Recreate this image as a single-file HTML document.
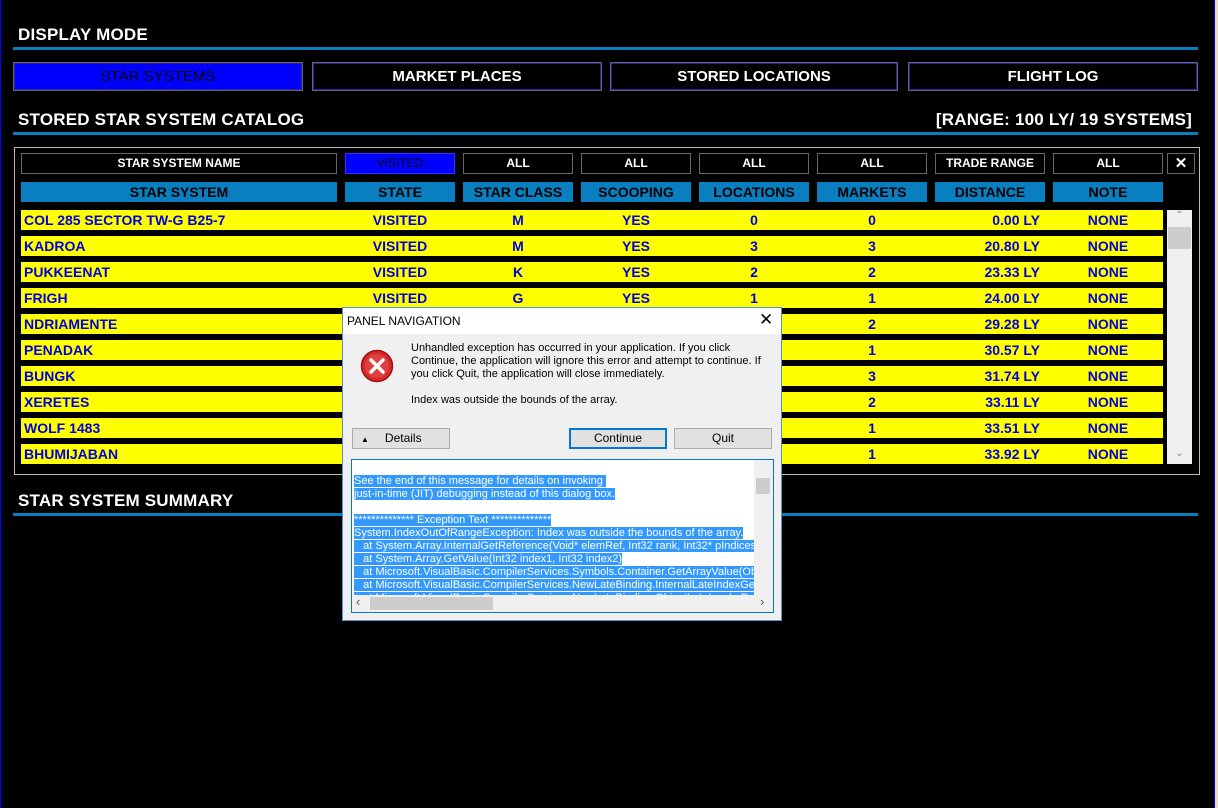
<!DOCTYPE html>
<html><head><meta charset="utf-8"><style>
*{margin:0;padding:0;box-sizing:border-box}
body{width:1218px;height:808px;background:#e8dcc0;position:relative;overflow:hidden;font-family:"Liberation Sans",Arial,sans-serif}
#app{position:absolute;left:0;top:0;width:1215px;height:808px;background:#000;border-left:1px solid #0000ff;border-right:1px solid #0000ff}
.a{position:absolute}
.h{color:#fff;font-size:17px;font-weight:bold;letter-spacing:0.2px}
.line{position:absolute;height:3px;background:#0a7fc0}
.mb{position:absolute;top:62px;height:29px;border:1px solid #666;outline:1px solid #2222aa;outline-offset:-2px;color:#fff;font-size:15px;font-weight:bold;text-align:center;line-height:27px}
.f{position:absolute;top:153px;height:21px;border:1px solid #666;color:#fff;font-size:12px;font-weight:bold;text-align:center;line-height:19px}
.hd{position:absolute;top:182px;height:20px;background:#0a7fc0;color:#000;font-size:14px;font-weight:bold;text-align:center;line-height:20px}
.r{position:absolute;left:20px;width:1142px;height:20px;background:#ffff00;color:#0000e0;font-size:14px;font-weight:bold;line-height:20px}
.r span{position:absolute;top:0;text-align:center}
.dlg{font-family:"Liberation Sans",Arial,sans-serif;font-size:11px;color:#000}
.btn{position:absolute;height:21px;background:#e1e1e1;border:1px solid #adadad;text-align:center;line-height:19px;font-size:12px}
.sel{background:#3399ff;color:#fff}
</style></head><body>
<div id="app">
<div class="a h" style="left:17px;top:25px">DISPLAY MODE</div>
<div class="line" style="left:12px;top:47px;width:1185px"></div>
<div class="mb" style="left:12px;width:290px;background:#0000ff;color:#000;font-weight:normal">STAR SYSTEMS</div>
<div class="mb" style="left:311px;width:290px">MARKET PLACES</div>
<div class="mb" style="left:609px;width:288px">STORED LOCATIONS</div>
<div class="mb" style="left:907px;width:290px">FLIGHT LOG</div>
<div class="a h" style="left:17px;top:110px">STORED STAR SYSTEM CATALOG</div>
<div class="a h" style="right:22px;top:110px">[RANGE: 100 LY/ 19 SYSTEMS]</div>
<div class="line" style="left:12px;top:132px;width:1185px"></div>
<div class="a" style="left:13px;top:147px;width:1186px;height:328px;border:1px solid #bbb"></div>

<div class="f" style="left:20px;width:316px">STAR SYSTEM NAME</div>
<div class="f" style="left:344px;width:110px;background:#0000ff;color:#000;border-color:#3333ff;font-weight:normal">VISITED</div>
<div class="f" style="left:462px;width:110px">ALL</div>
<div class="f" style="left:580px;width:110px">ALL</div>
<div class="f" style="left:698px;width:110px">ALL</div>
<div class="f" style="left:816px;width:110px">ALL</div>
<div class="f" style="left:934px;width:110px">TRADE RANGE</div>
<div class="f" style="left:1052px;width:110px">ALL</div>
<div class="f" style="left:1166px;width:28px;font-size:15px">✕</div>

<div class="hd" style="left:20px;width:316px">STAR SYSTEM</div>
<div class="hd" style="left:344px;width:110px">STATE</div>
<div class="hd" style="left:462px;width:110px">STAR CLASS</div>
<div class="hd" style="left:580px;width:110px">SCOOPING</div>
<div class="hd" style="left:698px;width:110px">LOCATIONS</div>
<div class="hd" style="left:816px;width:110px">MARKETS</div>
<div class="hd" style="left:934px;width:110px">DISTANCE</div>
<div class="hd" style="left:1052px;width:110px">NOTE</div>

<div class="r" style="top:210px"><span style="left:3px">COL 285 SECTOR TW-G B25-7</span><span style="left:324px;width:110px">VISITED</span><span style="left:442px;width:110px">M</span><span style="left:560px;width:110px">YES</span><span style="left:678px;width:110px">0</span><span style="left:796px;width:110px">0</span><span style="left:914px;width:105px;text-align:right">0.00 LY</span><span style="left:1032px;width:110px">NONE</span></div>
<div class="r" style="top:236px"><span style="left:3px">KADROA</span><span style="left:324px;width:110px">VISITED</span><span style="left:442px;width:110px">M</span><span style="left:560px;width:110px">YES</span><span style="left:678px;width:110px">3</span><span style="left:796px;width:110px">3</span><span style="left:914px;width:105px;text-align:right">20.80 LY</span><span style="left:1032px;width:110px">NONE</span></div>
<div class="r" style="top:262px"><span style="left:3px">PUKKEENAT</span><span style="left:324px;width:110px">VISITED</span><span style="left:442px;width:110px">K</span><span style="left:560px;width:110px">YES</span><span style="left:678px;width:110px">2</span><span style="left:796px;width:110px">2</span><span style="left:914px;width:105px;text-align:right">23.33 LY</span><span style="left:1032px;width:110px">NONE</span></div>
<div class="r" style="top:288px"><span style="left:3px">FRIGH</span><span style="left:324px;width:110px">VISITED</span><span style="left:442px;width:110px">G</span><span style="left:560px;width:110px">YES</span><span style="left:678px;width:110px">1</span><span style="left:796px;width:110px">1</span><span style="left:914px;width:105px;text-align:right">24.00 LY</span><span style="left:1032px;width:110px">NONE</span></div>
<div class="r" style="top:314px"><span style="left:3px">NDRIAMENTE</span><span style="left:796px;width:110px">2</span><span style="left:914px;width:105px;text-align:right">29.28 LY</span><span style="left:1032px;width:110px">NONE</span></div>
<div class="r" style="top:340px"><span style="left:3px">PENADAK</span><span style="left:796px;width:110px">1</span><span style="left:914px;width:105px;text-align:right">30.57 LY</span><span style="left:1032px;width:110px">NONE</span></div>
<div class="r" style="top:366px"><span style="left:3px">BUNGK</span><span style="left:796px;width:110px">3</span><span style="left:914px;width:105px;text-align:right">31.74 LY</span><span style="left:1032px;width:110px">NONE</span></div>
<div class="r" style="top:392px"><span style="left:3px">XERETES</span><span style="left:796px;width:110px">2</span><span style="left:914px;width:105px;text-align:right">33.11 LY</span><span style="left:1032px;width:110px">NONE</span></div>
<div class="r" style="top:418px"><span style="left:3px">WOLF 1483</span><span style="left:796px;width:110px">1</span><span style="left:914px;width:105px;text-align:right">33.51 LY</span><span style="left:1032px;width:110px">NONE</span></div>
<div class="r" style="top:444px"><span style="left:3px">BHUMIJABAN</span><span style="left:796px;width:110px">1</span><span style="left:914px;width:105px;text-align:right">33.92 LY</span><span style="left:1032px;width:110px">NONE</span></div>

<div class="a" style="left:1166px;top:210px;width:25px;height:254px;background:#f0f0f0"></div>
<div class="a" style="left:1167px;top:227px;width:23px;height:22px;background:#cdcdcd"></div>
<div class="a" style="left:1166px;top:210px;width:25px;text-align:center;font-size:10px;color:#888">⌃</div>
<div class="a" style="left:1166px;top:448px;width:25px;text-align:center;font-size:10px;color:#888">⌄</div>

<div class="a h" style="left:17px;top:491px">STAR SYSTEM SUMMARY</div>
<div class="line" style="left:12px;top:513px;width:1185px"></div>
</div>

<!-- dialog -->
<div class="a dlg" style="left:342px;top:307px;width:440px;height:314px;background:#f0f0f0;border:1px solid #5a8fd0">
 <div class="a" style="left:0;top:0;width:438px;height:26px;background:#fff"></div>
 <div class="a" style="left:4px;top:6px;font-size:12px">PANEL NAVIGATION</div>
 <div class="a" style="left:416px;top:2px;font-size:17px">✕</div>
 <svg class="a" style="left:17px;top:41px" width="34" height="34" viewBox="0 0 34 34"><circle cx="17" cy="17" r="15.5" fill="#d52a2a" stroke="#a01010" stroke-width="1.5"/><circle cx="17" cy="17" r="12" fill="#e04040"/><path d="M11 11L23 23M23 11L11 23" stroke="#fff" stroke-width="3.5" stroke-linecap="round"/></svg>
 <div class="a" style="left:68px;top:34px;width:360px;line-height:13px">Unhandled exception has occurred in your application. If you click Continue, the application will ignore this error and attempt to continue. If you click Quit, the application will close immediately.</div>
 <div class="a" style="left:68px;top:86px">Index was outside the bounds of the array.</div>
 <div class="btn" style="left:9px;top:120px;width:98px;text-align:left"><span style="font-size:8px;margin-left:8px">▲</span><span style="margin-left:16px">Details</span></div>
 <div class="btn" style="left:226px;top:120px;width:98px;border:2px solid #0078d7;line-height:17px">Continue</div>
 <div class="btn" style="left:331px;top:120px;width:98px">Quit</div>
 <div class="a" style="left:8px;top:151px;width:423px;height:154px;background:#fff;border:1px solid #0078d7;overflow:hidden">
  <div style="position:absolute;left:2px;top:2px;width:400px;line-height:13px;white-space:pre;font-size:11px">
<span class="sel">See the end of this message for details on invoking </span>
<span class="sel">just-in-time (JIT) debugging instead of this dialog box.</span>

<span class="sel">************** Exception Text **************</span>
<span class="sel">System.IndexOutOfRangeException: Index was outside the bounds of the array.</span>
<span class="sel">   at System.Array.InternalGetReference(Void* elemRef, Int32 rank, Int32* pIndices)</span>
<span class="sel">   at System.Array.GetValue(Int32 index1, Int32 index2)</span>
<span class="sel">   at Microsoft.VisualBasic.CompilerServices.Symbols.Container.GetArrayValue(Object</span>
<span class="sel">   at Microsoft.VisualBasic.CompilerServices.NewLateBinding.InternalLateIndexGet(O</span>
<span class="sel">   at Microsoft.VisualBasic.CompilerServices.NewLateBinding.ObjectLateInvokeDefau</span></div>
  <div class="a" style="left:402px;top:0;width:19px;height:135px;background:#f0f0f0"></div>
  <div class="a" style="left:404px;top:18px;width:14px;height:16px;background:#cdcdcd"></div>
  <div class="a" style="left:0;top:135px;width:421px;height:17px;background:#f0f0f0"></div>
  <div class="a" style="left:18px;top:137px;width:123px;height:13px;background:#cdcdcd"></div>
  <div class="a" style="left:4px;top:134px;font-size:13px;color:#555">‹</div>
  <div class="a" style="left:408px;top:134px;font-size:13px;color:#555">›</div>
 </div>
</div>
</body></html>
